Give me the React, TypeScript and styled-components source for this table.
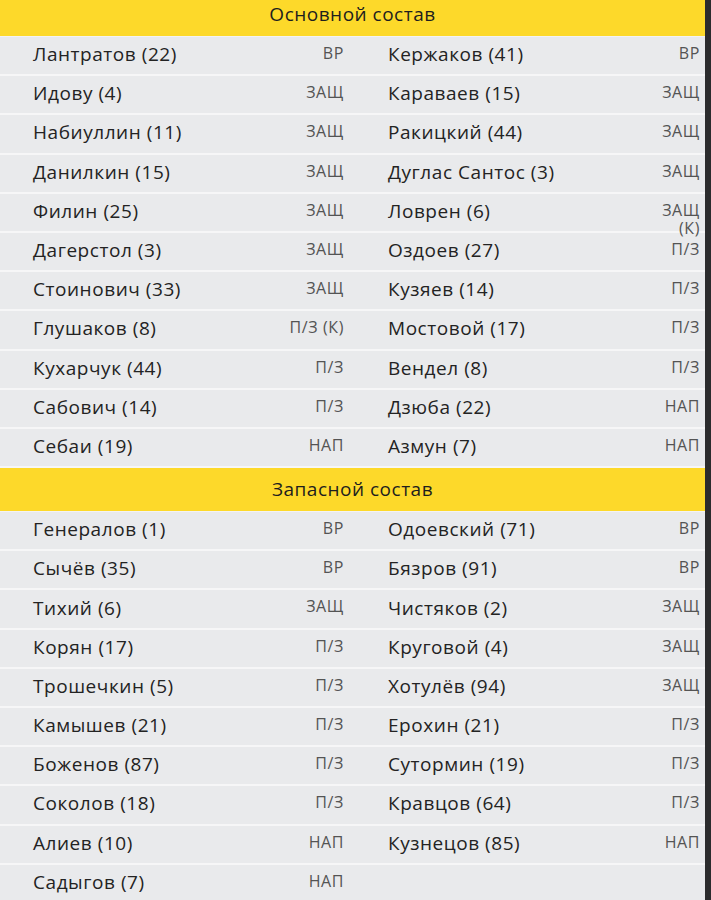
import styled, { createGlobalStyle } from 'styled-components';

const GlobalStyle = createGlobalStyle`
  html, body {
    margin: 0;
    padding: 0;
    background: #2b2b2d;
    overflow: hidden;
  }
  body {
    font-family: "Open Sans", "Noto Sans", "DejaVu Sans", sans-serif;
  }
`;

type Player = { name: string; pos: string; wrap?: boolean };
type Row = [Player, Player | null];

const mainSquad: Row[] = [
  [{ name: 'Лантратов (22)', pos: 'ВР' }, { name: 'Кержаков (41)', pos: 'ВР' }],
  [{ name: 'Идову (4)', pos: 'ЗАЩ' }, { name: 'Караваев (15)', pos: 'ЗАЩ' }],
  [{ name: 'Набиуллин (11)', pos: 'ЗАЩ' }, { name: 'Ракицкий (44)', pos: 'ЗАЩ' }],
  [{ name: 'Данилкин (15)', pos: 'ЗАЩ' }, { name: 'Дуглас Сантос (3)', pos: 'ЗАЩ' }],
  [{ name: 'Филин (25)', pos: 'ЗАЩ' }, { name: 'Ловрен (6)', pos: 'ЗАЩ (К)', wrap: true }],
  [{ name: 'Дагерстол (3)', pos: 'ЗАЩ' }, { name: 'Оздоев (27)', pos: 'П/З' }],
  [{ name: 'Стоинович (33)', pos: 'ЗАЩ' }, { name: 'Кузяев (14)', pos: 'П/З' }],
  [{ name: 'Глушаков (8)', pos: 'П/З (К)' }, { name: 'Мостовой (17)', pos: 'П/З' }],
  [{ name: 'Кухарчук (44)', pos: 'П/З' }, { name: 'Вендел (8)', pos: 'П/З' }],
  [{ name: 'Сабович (14)', pos: 'П/З' }, { name: 'Дзюба (22)', pos: 'НАП' }],
  [{ name: 'Себаи (19)', pos: 'НАП' }, { name: 'Азмун (7)', pos: 'НАП' }],
];

const reserves: Row[] = [
  [{ name: 'Генералов (1)', pos: 'ВР' }, { name: 'Одоевский (71)', pos: 'ВР' }],
  [{ name: 'Сычёв (35)', pos: 'ВР' }, { name: 'Бязров (91)', pos: 'ВР' }],
  [{ name: 'Тихий (6)', pos: 'ЗАЩ' }, { name: 'Чистяков (2)', pos: 'ЗАЩ' }],
  [{ name: 'Корян (17)', pos: 'П/З' }, { name: 'Круговой (4)', pos: 'ЗАЩ' }],
  [{ name: 'Трошечкин (5)', pos: 'П/З' }, { name: 'Хотулёв (94)', pos: 'ЗАЩ' }],
  [{ name: 'Камышев (21)', pos: 'П/З' }, { name: 'Ерохин (21)', pos: 'П/З' }],
  [{ name: 'Боженов (87)', pos: 'П/З' }, { name: 'Сутормин (19)', pos: 'П/З' }],
  [{ name: 'Соколов (18)', pos: 'П/З' }, { name: 'Кравцов (64)', pos: 'П/З' }],
  [{ name: 'Алиев (10)', pos: 'НАП' }, { name: 'Кузнецов (85)', pos: 'НАП' }],
  [{ name: 'Садыгов (7)', pos: 'НАП' }, null],
];

const Page = styled.div`
  display: flex;
  height: 900px;
  overflow: hidden;
`;

const Sheet = styled.div`
  flex: 1;
  margin-top: -7px;
  background: #e9eaec;
`;

const Edge = styled.div`
  width: 6px;
  background: #2b2b2d;
`;

const SectionTitle = styled.div`
  height: 44px;
  display: flex;
  align-items: center;
  justify-content: center;
  padding-bottom: 2px;
  box-sizing: border-box;
  background: #fdd92a;
  color: #1e1e1e;
  font-size: 19px;
  font-weight: 500;
  letter-spacing: 0.5px;
  border-bottom: 1px solid #f3f3f4;
`;

const Grid = styled.div`
  display: grid;
  grid-template-columns: 355px 1fr;
`;

const Cell = styled.div<{ $right?: boolean }>`
  height: 39.2px;
  box-sizing: border-box;
  display: flex;
  justify-content: space-between;
  padding: 0 ${({ $right }) => ($right ? '5px' : '11px')} 3px 33px;
  border-bottom: 2px solid #f6f6f7;
`;

const Name = styled.span`
  align-self: center;
  font-size: 19px;
  font-weight: 500;
  letter-spacing: 0.55px;
  color: #232323;
  white-space: nowrap;
`;

const Position = styled.span<{ $wrap?: boolean }>`
  padding-top: 7px;
  font-size: 16px;
  line-height: 18px;
  letter-spacing: 0.6px;
  color: #545454;
  text-align: right;
  white-space: ${({ $wrap }) => ($wrap ? 'normal' : 'nowrap')};
  max-width: ${({ $wrap }) => ($wrap ? '48px' : 'none')};
  height: 18px;
`;

const PlayerCell = ({ player, right }: { player: Player | null; right?: boolean }) => (
  <Cell $right={right}>
    {player && (
      <>
        <Name>{player.name}</Name>
        <Position $wrap={player.wrap}>{player.pos}</Position>
      </>
    )}
  </Cell>
);

const PlayerRow = ({ a, b }: { a: Player; b: Player | null }) => (
  <>
    <PlayerCell player={a} />
    <PlayerCell player={b} right />
  </>
);

const Section = ({ title, rows }: { title: string; rows: Row[] }) => (
  <>
    <SectionTitle>{title}</SectionTitle>
    <Grid>
      {rows.map(([a, b], i) => (
        <PlayerRow key={i} a={a} b={b} />
      ))}
    </Grid>
  </>
);

export default function App() {
  return (
    <>
      <GlobalStyle />
      <Page>
        <Sheet>
          <Section title="Основной состав" rows={mainSquad} />
          <Section title="Запасной состав" rows={reserves} />
        </Sheet>
        <Edge />
      </Page>
    </>
  );
}
